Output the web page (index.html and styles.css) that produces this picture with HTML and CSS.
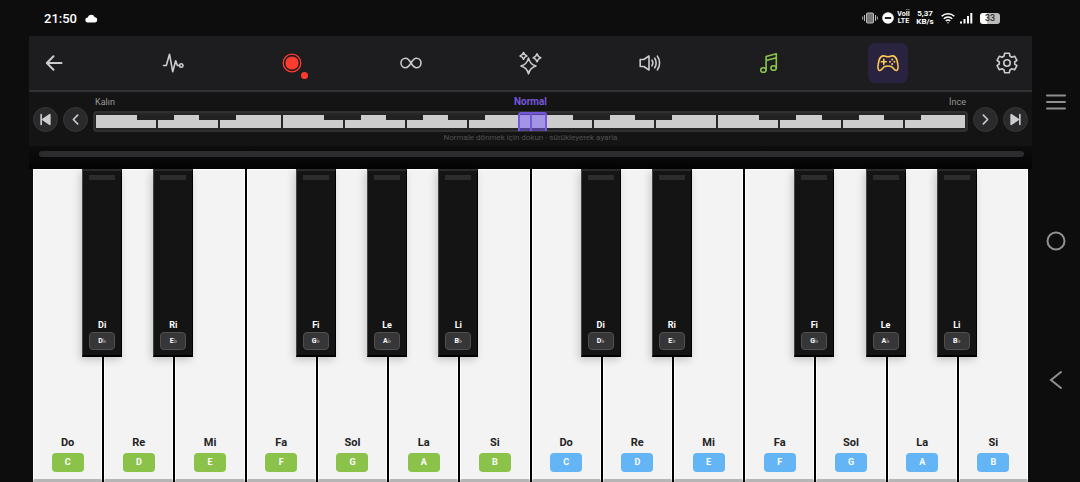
FILE: index.html
```html
<!DOCTYPE html>
<html lang="tr">
<head>
<meta charset="utf-8">
<meta name="viewport" content="width=device-width, initial-scale=1">
<title>Piyano</title>
<link rel="stylesheet" href="styles.css">
</head>
<body>
<div class="screen">
  <header class="status">
    <div class="status-group">
      <time class="clock">21:50</time>
      <svg class="cloud" viewBox="0 0 13 9"><path fill="#fff" d="M3 8.500a2.500 2.500 0 0 1-.3-5A3.700 3.700 0 0 1 9.600 3a2.800 2.800 0 0 1 .6 5.500z"/></svg>
    </div>
    <div class="status-group status-right">
      <svg width="16" height="12" viewBox="0 0 16 12" fill="none" stroke="#bbb"><rect x="4.500" y="1" width="7" height="10" rx="1" fill="#777"/><path d="M2.500 3v6M13.500 3v6M.7 4.500v3M15.300 4.500v3"/></svg>
      <svg width="12" height="12" viewBox="0 0 12 12"><circle cx="6" cy="6" r="5.800" fill="#fff"/><path d="M2.800 6h6.400" stroke="#111" stroke-width="1.800"/></svg>
      <span class="stack volte"><span>Voİİ</span><span>LTE</span></span>
      <span class="stack speed"><span>5,37</span><span>KB/s</span></span>
      <svg width="14" height="12" viewBox="0 0 14 12" fill="none" stroke="#fff" stroke-width="1.500"><path d="M.7 4.300a9 9 0 0 1 12.600 0M2.800 6.700a6 6 0 0 1 8.400 0M4.800 9a3.200 3.200 0 0 1 4.400 0"/><circle cx="7" cy="10.700" r=".7" fill="#fff" stroke="none"/></svg>
      <svg width="14" height="12" viewBox="0 0 14 12" fill="#fff"><rect x="1" y="9.500" width="2" height="2"/><rect x="4.500" y="7" width="2" height="4.500"/><rect x="8" y="4" width="2" height="7.500"/><rect x="11.300" y="1" width="2" height="10.500"/></svg>
      <span class="battery">33</span>
    </div>
  </header>

  <main class="app">
    <nav class="toolbar" aria-label="Araçlar">
      <button class="tool back" aria-label="Geri"><svg viewBox="0 0 24 24"><path d="M19.500 12H4.800M11.500 5.200 4.800 12l6.700 6.800"/></svg></button>
      <button class="tool" aria-label="Ses dalgası"><svg viewBox="0 0 24 24"><path d="M2.500 14.500h2.800L8.500 3.200l3.200 17.500 3-11 1.700 4.800h2.200"/><circle cx="20.200" cy="14.500" r="1.700"/></svg></button>
      <button class="tool record" aria-label="Kaydet"><svg viewBox="0 0 24 24"><circle cx="12" cy="12" r="8.800"/><circle cx="12" cy="12" r="6.600" fill="currentColor" stroke="none"/></svg><span class="dot"></span></button>
      <button class="tool" aria-label="Döngü"><svg viewBox="0 0 24 24"><path d="M12 12C9.800 8.500 8.500 7.300 6.700 7.300a4.700 4.700 0 0 0 0 9.400c1.800 0 3.100-1.200 5.300-4.700s3.500-4.700 5.300-4.700a4.700 4.700 0 0 1 0 9.400c-1.800 0-3.100-1.200-5.300-4.700z"/></svg></button>
      <button class="tool" aria-label="Efektler"><svg viewBox="0 0 24 24"><path d="M9.500 7c1.200 4.800 3 6.500 7.500 8-4.500 1.300-6.300 3-7.500 7.700C8.300 18 6.500 16.300 2 15c4.500-1.500 6.300-3.200 7.500-8zM4.500 1.500c.6 2 1.400 2.700 3.400 3.400-2 .6-2.800 1.400-3.400 3.400-.6-2-1.400-2.800-3.400-3.400 2-.7 2.800-1.400 3.400-3.400zM18 2.800c.7 2.500 1.500 3.300 3.800 4-2.300.8-3.100 1.600-3.800 4-.7-2.400-1.500-3.200-3.800-4 2.300-.7 3.100-1.500 3.800-4z"/></svg></button>
      <button class="tool" aria-label="Ses"><svg viewBox="0 0 24 24"><path d="M2.200 8.500h3.600L11 5v14l-5.200-3.500H2.200zM14 9.200c1 1.600 1 4 0 5.600M16.700 7.200c1.900 2.600 1.900 7 0 9.600M19.400 5.200c2.900 3.800 2.900 9.800 0 13.600"/></svg></button>
      <button class="tool notes" aria-label="Notalar"><svg viewBox="0 0 24 24"><ellipse cx="6.400" cy="19" rx="2.700" ry="2.300"/><ellipse cx="16.600" cy="17" rx="2.700" ry="2.300"/><path d="M9.100 19V5.500L19.300 2.800V17M9.100 9.500l10.200-2.700"/></svg></button>
      <button class="tool game" aria-label="Oyun"><svg viewBox="0 0 24 24"><path d="M7.800 4.900c1.500 0 1.800.8 4.200.8s2.700-.8 4.200-.8c3 0 4.200 1.600 5 5.300.8 3.500 1.500 8.600-.6 9.200-2.200.6-3.300-3-5.300-3.800-1.800-.6-4.800-.6-6.600 0-2 .8-3.100 4.400-5.300 3.800-2.100-.6-1.400-5.700-.6-9.200.8-3.700 2-5.300 5-5.300zM7.800 8.300v5M5.300 10.800h5"/><g fill="currentColor" stroke="none"><circle cx="16.200" cy="8.600" r="1"/><circle cx="16.200" cy="13" r="1"/><circle cx="14" cy="10.800" r="1"/><circle cx="18.400" cy="10.800" r="1"/></g></svg></button>
      <button class="tool" aria-label="Ayarlar"><svg viewBox="0 0 24 24"><path d="M9.600 2.300h4.800l.5 2.700 2 1.200 2.700-1 2.300 4.100-2.200 1.700v2l2.200 1.700-2.300 4.100-2.700-1-2 1.200-.5 2.700H9.600L9.100 19l-2-1.200-2.700 1-2.300-4.100L4.300 13v-2L2.100 9.300l2.300-4.100 2.700 1 2-1.200z"/><circle cx="12" cy="12" r="3.200"/></svg></button>
    </nav>

    <section class="range" aria-label="Oktav aralığı">
      <button class="round" aria-label="En kalın"><svg viewBox="0 0 12 12"><path d="M10 1.500v9L3.500 6z" fill="currentColor"/><path d="M2 1.500v9"/></svg></button>
      <button class="round" aria-label="Daha kalın"><svg viewBox="0 0 12 12"><path d="M8 2 4 6l4 4"/></svg></button>
      <div class="range-main">
        <div class="range-labels"><span>Kalın</span><strong>Normal</strong><span class="end">İnce</span></div>
        <div class="track">
          <div class="mini"><i class="sharp"></i><i class="sharp"></i><i></i><i class="sharp"></i><i class="sharp"></i><i class="sharp"></i><i></i><i class="sharp"></i><i class="sharp"></i><i></i><i class="sharp"></i><i class="sharp"></i><i class="sharp"></i><i></i></div>
          <button class="window" aria-label="Görünen aralık"></button>
        </div>
        <p class="hint">Normale dönmek için dokun · sürükleyerek ayarla</p>
      </div>
      <button class="round" aria-label="Daha ince"><svg viewBox="0 0 12 12"><path d="m4 2 4 4-4 4"/></svg></button>
      <button class="round" aria-label="En ince"><svg viewBox="0 0 12 12"><path d="M2 1.500v9L8.500 6z" fill="currentColor"/><path d="M10 1.500v9"/></svg></button>
    </section>

    <div class="scroll"><div class="scrollbar"></div></div>

    <section class="piano" aria-label="Klavye">
      <div class="slot"><button class="white">Do<span class="badge">C</span></button><button class="black">Di<span class="flat">D♭</span></button></div>
      <div class="slot"><button class="white">Re<span class="badge">D</span></button><button class="black">Ri<span class="flat">E♭</span></button></div>
      <div class="slot"><button class="white">Mi<span class="badge">E</span></button></div>
      <div class="slot"><button class="white">Fa<span class="badge">F</span></button><button class="black">Fi<span class="flat">G♭</span></button></div>
      <div class="slot"><button class="white">Sol<span class="badge">G</span></button><button class="black">Le<span class="flat">A♭</span></button></div>
      <div class="slot"><button class="white">La<span class="badge">A</span></button><button class="black">Li<span class="flat">B♭</span></button></div>
      <div class="slot"><button class="white">Si<span class="badge">B</span></button></div>
      <div class="slot high"><button class="white">Do<span class="badge">C</span></button><button class="black">Di<span class="flat">D♭</span></button></div>
      <div class="slot high"><button class="white">Re<span class="badge">D</span></button><button class="black">Ri<span class="flat">E♭</span></button></div>
      <div class="slot high"><button class="white">Mi<span class="badge">E</span></button></div>
      <div class="slot high"><button class="white">Fa<span class="badge">F</span></button><button class="black">Fi<span class="flat">G♭</span></button></div>
      <div class="slot high"><button class="white">Sol<span class="badge">G</span></button><button class="black">Le<span class="flat">A♭</span></button></div>
      <div class="slot high"><button class="white">La<span class="badge">A</span></button><button class="black">Li<span class="flat">B♭</span></button></div>
      <div class="slot high"><button class="white">Si<span class="badge">B</span></button></div>
    </section>
  </main>
</div>
<nav class="system" aria-label="Sistem">
  <button aria-label="Son uygulamalar"><svg viewBox="0 0 24 24"><path d="M3 5.500h18M3 12h18M3 18.500h18"/></svg></button>
  <button aria-label="Ana ekran"><svg viewBox="0 0 24 24"><circle cx="12" cy="12" r="8.500"/></svg></button>
  <button aria-label="Geri"><svg viewBox="0 0 24 24"><path d="M17 4 7 12l10 8"/></svg></button>
</nav>
</body>
</html>
```
FILE: styles.css
```css
* { box-sizing: border-box; }

body {
  margin: 0;
  min-height: 100vh;
  display: flex;
  background: #0d0d0d;
  color: #fff;
  font-family: Roboto, "DejaVu Sans", sans-serif;
}

button {
  margin: 0;
  padding: 0;
  border: 0;
  background: none;
  color: inherit;
  font: inherit;
}

svg { display: block; }

.screen {
  flex: 1;
  min-width: 0;
  display: flex;
  flex-direction: column;
  padding-left: 29px;
}

/* Status bar */
.status {
  height: 36px;
  padding: 0 32px 0 15px;
  display: flex;
  align-items: center;
  justify-content: space-between;
}

.status-group { display: flex; align-items: center; gap: 8px; }
.status-right { gap: 4px; }
.clock { font-size: 13px; font-weight: 500; }
.cloud { width: 13px; height: 9px; }

.stack {
  display: flex;
  flex-direction: column;
  align-items: center;
  font-size: 8px;
  line-height: 8px;
  font-weight: 700;
}

.volte { width: 11px; font-size: 7px; line-height: 7px; }
.speed { width: 18px; margin: 0 3px; }

.battery {
  width: 20px;
  height: 11px;
  margin-left: 3px;
  border-radius: 3px;
  background: linear-gradient(90deg, #fff 33%, #bbb 33%);
  color: #333;
  font-size: 9px;
  line-height: 11px;
  font-weight: 500;
  text-align: center;
}

/* Toolbar */
.app { flex: 1; display: flex; flex-direction: column; }

.toolbar {
  height: 56px;
  padding: 0 5px;
  display: flex;
  align-items: center;
  justify-content: space-between;
  background: #1d1d1f;
  border-bottom: 2px solid #333335;
}

.tool {
  position: relative;
  width: 40px;
  height: 40px;
  display: grid;
  place-items: center;
  border-radius: 7px;
  color: #ccc;
}

.tool svg {
  width: 24px;
  height: 24px;
  fill: none;
  stroke: currentColor;
  stroke-width: 1.6;
  stroke-linecap: round;
  stroke-linejoin: round;
}

.back svg { stroke-width: 2; }
.record { color: #ff3b30; }
.record svg { stroke-width: 1.3; }
.dot {
  position: absolute;
  right: 4px;
  bottom: 4px;
  width: 7px;
  height: 7px;
  border-radius: 50%;
  background: #ff3b30;
}
.notes { color: #8bc34a; }
.game { color: #ffca4f; background: #2a2340; }

/* Range selector */
.range {
  padding: 4px;
  display: flex;
  align-items: center;
  gap: 5px;
  background: #141414;
}

.round {
  flex: none;
  width: 25px;
  height: 25px;
  display: grid;
  place-items: center;
  border: 1px solid #373737;
  border-radius: 50%;
  background: #2a2a2c;
  color: #ccc;
}

.round svg {
  width: 13px;
  height: 13px;
  fill: none;
  stroke: currentColor;
  stroke-width: 1.5;
  stroke-linecap: round;
  stroke-linejoin: round;
}

.range-main { flex: 1; }

.range-labels {
  padding: 0 2px;
  display: grid;
  grid-template-columns: 1fr auto 1fr;
  align-items: center;
  color: #999;
  font-size: 9px;
  line-height: 12px;
}

.range-labels strong { color: #7457dc; font-size: 10px; }
.end { text-align: right; }

.track {
  position: relative;
  height: 21px;
  margin-top: 3px;
  padding: 2px 1px;
  border: 2px solid #303030;
  border-radius: 4px;
  background: #262626;
}

.mini {
  height: 13px;
  display: grid;
  grid-template-columns: repeat(14, 1fr);
  gap: 2px;
}

.mini i { position: relative; background: #ccc; }

.mini .sharp::after {
  content: "";
  position: absolute;
  z-index: 1;
  top: 0;
  right: -18px;
  width: 37px;
  height: 5px;
  background: #222;
}

.window {
  position: absolute;
  z-index: 2;
  top: -1px;
  bottom: -1px;
  left: 48.600%;
  width: 29px;
  border: 2px solid #7457dc;
  border-bottom: 0;
  border-radius: 3px 3px 0 0;
  background: linear-gradient(90deg, transparent 10px, #7457dc 10px, #7457dc 12px, transparent 12px), rgba(124, 92, 255, 0.5);
}

.hint {
  margin: 1px 0 0;
  color: #505050;
  font-size: 8px;
  line-height: 9px;
  text-align: center;
}

.scroll { padding: 5px 8px 12px 10px; background: linear-gradient(#0d0d0d, #040404); }
.scrollbar { height: 6px; border-radius: 3px; background: #2c2c2e; }

/* Piano */
.piano {
  flex: 1;
  min-height: 240px;
  margin: 0 4px;
  display: grid;
  grid-template-columns: repeat(14, 1fr);
  gap: 2px;
  background: #000;
}

.slot { position: relative; display: grid; }

.white {
  padding-bottom: 7px;
  display: flex;
  flex-direction: column;
  align-items: center;
  justify-content: flex-end;
  gap: 3px;
  border: 1px solid #fff;
  border-bottom: 3px solid #b5b5b5;
  background: #f3f3f3;
  color: #222;
  font-size: 11px;
  line-height: 14px;
  font-weight: 700;
}

.badge {
  width: 32px;
  border-radius: 4px;
  background: #8bc34a;
  color: #fff;
  font-size: 9px;
  line-height: 19px;
}

.high .badge { background: #64b5f6; }

.black {
  position: absolute;
  z-index: 1;
  top: 0;
  right: -20px;
  width: 40px;
  height: 60%;
  padding-bottom: 5px;
  display: flex;
  flex-direction: column;
  align-items: center;
  justify-content: flex-end;
  gap: 2px;
  border: 1px solid #000;
  border-top: 2px solid #2a2a2a;
  border-left-color: #444;
  border-bottom-width: 2px;
  background: #141414;
  box-shadow: -2px 3px 8px rgba(0, 0, 0, 0.18);
  color: #fff;
  font-size: 9px;
  line-height: 10px;
  font-weight: 700;
}

.black::before {
  content: "";
  width: 26px;
  height: 5px;
  margin: 4px 0 auto;
  background: #2c2c2c;
}

.flat {
  width: 26px;
  border: 1px solid #505050;
  border-radius: 4px;
  background: #363638;
  font-size: 7px;
  line-height: 16px;
}

/* System navigation */
.system {
  width: 48px;
  padding: 33px 0;
  display: flex;
  flex-direction: column;
  align-items: center;
  justify-content: space-around;
}

.system svg {
  width: 24px;
  height: 24px;
  fill: none;
  stroke: #909090;
  stroke-width: 2;
  stroke-linecap: round;
}
```
